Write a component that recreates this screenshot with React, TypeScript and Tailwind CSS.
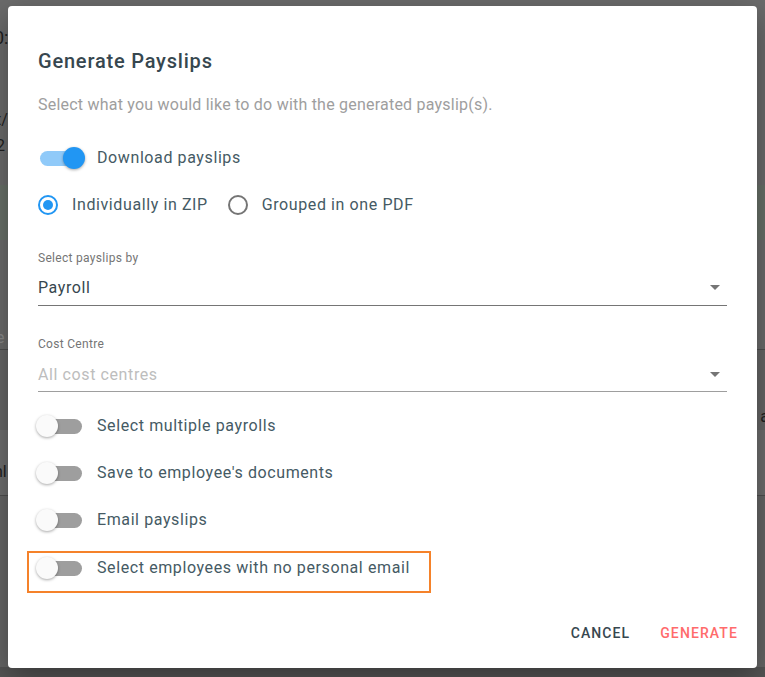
import React from "react";

function Toggle({ on }: { on?: boolean }) {
  return (
    <span className="relative inline-flex w-[48px] h-[24px] items-center shrink-0">
      <span
        className={
          "ml-[2px] w-[42px] h-[15px] rounded-full " +
          (on ? "bg-[#90caf9]" : "bg-[#9e9e9e]")
        }
      />
      <span
        className={
          "absolute top-[1px] w-[22px] h-[22px] rounded-full shadow-[0_1px_3px_rgba(0,0,0,0.35)] " +
          (on ? "left-[25px] bg-[#2196f3]" : "left-[-2px] bg-[#fafafa]")
        }
      />
    </span>
  );
}

function Radio({ checked, label }: { checked?: boolean; label: string }) {
  return (
    <div className="flex items-center h-[24px]">
      <span
        className={
          "w-[20px] h-[20px] rounded-full border-2 flex items-center justify-center " +
          (checked ? "border-[#2196f3]" : "border-[#757575]")
        }
      >
        {checked && <span className="w-[10px] h-[10px] rounded-full bg-[#2196f3]" />}
      </span>
      <span className="ml-[14px] text-[16px] tracking-[0.6px] text-[#455a64]">{label}</span>
    </div>
  );
}

function SelectField({ label, value, placeholder }: { label: string; value: string; placeholder?: boolean }) {
  return (
    <div>
      <div className="text-[12px] leading-[16px] tracking-[0.3px] text-[#757575]">{label}</div>
      <div
        className={
          "flex items-center justify-between border-b " +
          (placeholder ? "mt-[11px] pb-[4px] border-[#9e9e9e]" : "mt-[10px] pb-[5px] border-[#757575]")
        }
      >
        <span
          className={
            "text-[16px] leading-[24px] tracking-[0.6px] " + (placeholder ? "text-[#bdbdbd]" : "text-[#37474f]")
          }
        >
          {value}
        </span>
        <svg width="10" height="5" viewBox="0 0 10 5" className="mr-[7px] mt-[-1px]">
          <path d="M0 0h10L5 5z" fill="#757575" />
        </svg>
      </div>
    </div>
  );
}

function SwitchRow({ label, on }: { label: string; on?: boolean }) {
  return (
    <div className="flex items-center h-[24px]">
      <Toggle on={on} />
      <span className="ml-[11px] text-[16px] tracking-[0.6px] text-[#455a64]">{label}</span>
    </div>
  );
}

export default function App() {
  return (
    <div className="relative w-[765px] h-[677px] bg-[#6b6b6b] overflow-hidden font-['Roboto',sans-serif]">
      {/* page behind the backdrop */}
      <div className="h-[185px] relative text-[#1f1f1f] text-[16px]">
        <span className="absolute left-[-6px] top-[24px] text-[18px]">0:</span>
        <span className="absolute left-[-4px] top-[108px]">t/</span>
        <span className="absolute left-[-4px] top-[134px]">2</span>
      </div>
      <div className="h-[55px] bg-[#687068]" />
      <div className="h-[110px] relative border-b border-[#4f4f4f]">
        <span className="absolute left-[-4px] top-[86px] text-[16px] text-[#8a8a8a]">e</span>
      </div>
      <div className="h-[80px] bg-[#666666] relative">
        <span className="absolute right-[-4px] top-[55px] text-[16px] text-[#1f1f1f]">a</span>
      </div>
      <div className="h-[66px] bg-[#6e6e6e] relative border-b border-[#4f4f4f]">
        <span className="absolute left-[-6px] top-[30px] text-[16px] text-[#1f1f1f]">nl</span>
      </div>
      <div className="h-[171px] bg-[#666666]" />
      <div className="h-[10px] bg-[#555555]" />

      {/* dialog */}
      <div className="absolute left-[8px] top-[6px] w-[749px] h-[662px] bg-white rounded-[4px] shadow-[0_10px_30px_rgba(0,0,0,0.35)]">
        <div className="px-[30px]">
          <h2 className="pt-[42px] text-[20px] leading-[26px] font-medium tracking-[0.8px] text-[#37474f]">
            Generate Payslips
          </h2>
          <p className="mt-[19px] text-[16px] leading-[24px] tracking-[0.22px] text-[#9e9e9e]">
            Select what you would like to do with the generated payslip(s).
          </p>
          <div className="mt-[29px]">
            <SwitchRow label="Download payslips" on />
          </div>
          <div className="mt-[23px] flex items-center gap-[20px]">
            <Radio checked label="Individually in ZIP" />
            <Radio label="Grouped in one PDF" />
          </div>
          <div className="mt-[33px]">
            <SelectField label="Select payslips by" value="Payroll" />
          </div>
          <div className="mt-[30px]">
            <SelectField label="Cost Centre" value="All cost centres" placeholder />
          </div>
          <div className="mt-[22px] flex flex-col gap-[23px]">
            <SwitchRow label="Select multiple payrolls" />
            <SwitchRow label="Save to employee's documents" />
            <SwitchRow label="Email payslips" />
            <div className="relative mt-[1px]">
              <SwitchRow label="Select employees with no personal email" />
              <span className="absolute left-[-11px] top-[-5px] w-[404px] h-[42px] border-2 border-[#f5822a]" />
            </div>
          </div>
        </div>
        <div className="mt-[43px] flex justify-end gap-[30px] pr-[19px]">
          <button className="text-[14px] leading-[20px] font-medium tracking-[1.1px] text-[#37474f]">CANCEL</button>
          <button className="text-[14px] leading-[20px] font-medium tracking-[1.1px] text-[#ff6b6b]">GENERATE</button>
        </div>
      </div>
    </div>
  );
}
